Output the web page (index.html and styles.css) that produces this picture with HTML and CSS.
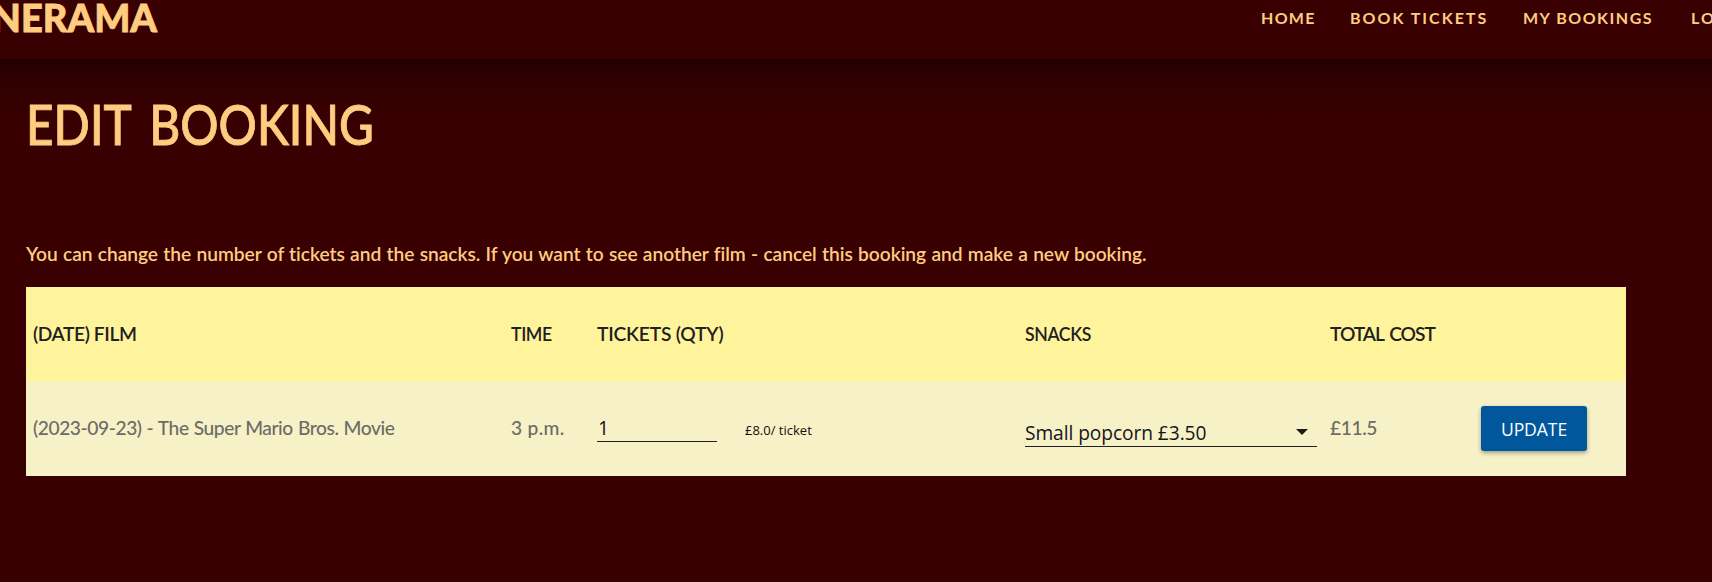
FILE: index.html
```html
<!DOCTYPE html>
<html lang="en">
<head>
<meta charset="utf-8">
<title>Edit Booking</title>
<link rel="stylesheet" href="styles.css">
</head>
<body>
<header class="topbar">
  <div class="brand">NERAMA</div>
  <nav class="nav">
    <a class="nav-home">HOME</a><a>BOOK TICKETS</a><a class="nav-mine">MY BOOKINGS</a><a>LO</a>
  </nav>
</header>
<main class="content">
  <h1 class="title">EDIT BOOKING</h1>
  <p class="intro">You can change the number of tickets and the snacks. If you want to see another film - cancel this booking and make a new booking.</p>
  <section class="booking">
    <div class="row head">
      <div>(DATE) FILM</div>
      <div class="narrow">TIME</div>
      <div class="qty-title">TICKETS (QTY)</div>
      <div class="narrow">SNACKS</div>
      <div class="total-title">TOTAL COST</div>
      <div></div>
    </div>
    <div class="row item">
      <div class="film">(2023-09-23) - The Super Mario Bros. Movie</div>
      <div class="time">3 p.m.</div>
      <div class="tickets"><span class="qty">1</span><small class="price">£8.0/ ticket</small></div>
      <div class="snack"><span class="snack-name">Small popcorn £3.50</span>
        <svg class="arrow" width="12" height="6" viewBox="0 0 12 6"><path d="M0 0h12L6 6z" fill="#1c1c16"/></svg>
      </div>
      <div class="cost">£11.5</div>
      <div><button class="update">UPDATE</button></div>
    </div>
  </section>
</main>
</body>
</html>
```
FILE: styles.css
```css
* { box-sizing: border-box; }
body {
  margin: 0;
  height: 582px;
  overflow: hidden;
  background: #380000;
  color: #ffcc80;
  font: 19.2px/24px Lato, sans-serif;
}
.topbar {
  height: 59px;
  display: flex;
  justify-content: space-between;
  align-items: flex-start;
  overflow: hidden;
}
.brand {
  width: 157px;
  height: 34px;
  display: flex;
  justify-content: flex-end;
  font-size: 38px;
  font-weight: 900;
  line-height: 34px;
  -webkit-text-stroke: .8px #ffcc80;
}
.nav {
  width: 452px;
  display: grid;
  grid-template-columns: 89px 173px 168px 1fr;
  flex: none;
  padding-left: 1px;
  padding-top: 6px;
  font-size: 16px;
  font-weight: 700;
  letter-spacing: 2px;
  white-space: nowrap;
}
.nav-home { letter-spacing: 1.3px; }
.nav-mine { letter-spacing: 1.5px; }
.content {
  height: 523px;
  padding: 0 26px;
  background: linear-gradient(#1e0000 0, #270000 6px, #2e0000 20px, #350000 42px, #380000 64px);
}
.title {
  margin: 0;
  padding-top: 34px;
  font-size: 56px;
  font-weight: 500;
  line-height: 62px;
  word-spacing: 8px;
  white-space: nowrap;
  -webkit-text-stroke: .9px #ffcc80;
  transform: scaleX(.853);
  transform-origin: left;
}
.intro {
  margin: 0;
  padding-top: 87px;
  height: 132px;
  font-weight: 600;
  letter-spacing: -.04px;
  word-spacing: .57px;
  white-space: nowrap;
}
.booking { width: 1600px; }
.row {
  display: grid;
  grid-template-columns: 478px 86px 428px 305px 151px 1fr;
  align-items: center;
  padding-left: 7px;
}
.head {
  height: 94px;
  background: #fff49c;
  color: #212121;
  font-weight: 600;
  letter-spacing: -.4px;
}
.narrow {
  transform: scaleX(.92);
  transform-origin: left;
}
.qty-title { letter-spacing: -.2px; }
.total-title { letter-spacing: -1px; word-spacing: 2px; }
.item {
  height: 95px;
  background: #f7f1c7;
  color: #6c6c66;
  font-weight: 500;
  letter-spacing: -.42px;
}
.film { word-spacing: .6px; }
.film, .time, .cost { padding-bottom: 2px; }
.time { letter-spacing: .3px; }
.tickets {
  display: flex;
  align-items: baseline;
  gap: 28px;
  letter-spacing: 0;
  color: #210a0c;
}
.qty {
  width: 120px;
  height: 26px;
  padding-left: 1px;
  border-bottom: 1px solid #212121;
  font: 400 19.2px/24px "Open Sans", sans-serif;
}
.price { font: 13px/20px "Open Sans", sans-serif; }
.snack {
  width: 292px;
  height: 28px;
  margin-top: 8px;
  padding-right: 9px;
  display: flex;
  justify-content: space-between;
  align-items: center;
  border-bottom: 1px solid #212121;
  color: #15151a;
  font-family: "Open Sans", sans-serif;
  font-weight: 400;
  letter-spacing: -.08px;
}
.snack-name { padding-top: 2px; }
.update {
  display: block;
  width: 106px;
  height: 45px;
  padding: 1px 0 0;
  border: 0;
  border-radius: 3px;
  background: #01579b;
  color: #fff;
  font: 17.6px/44px "Open Sans", sans-serif;
  letter-spacing: -.1px;
  box-shadow: 0 2px 4px rgba(0, 0, 0, .35);
}
```
